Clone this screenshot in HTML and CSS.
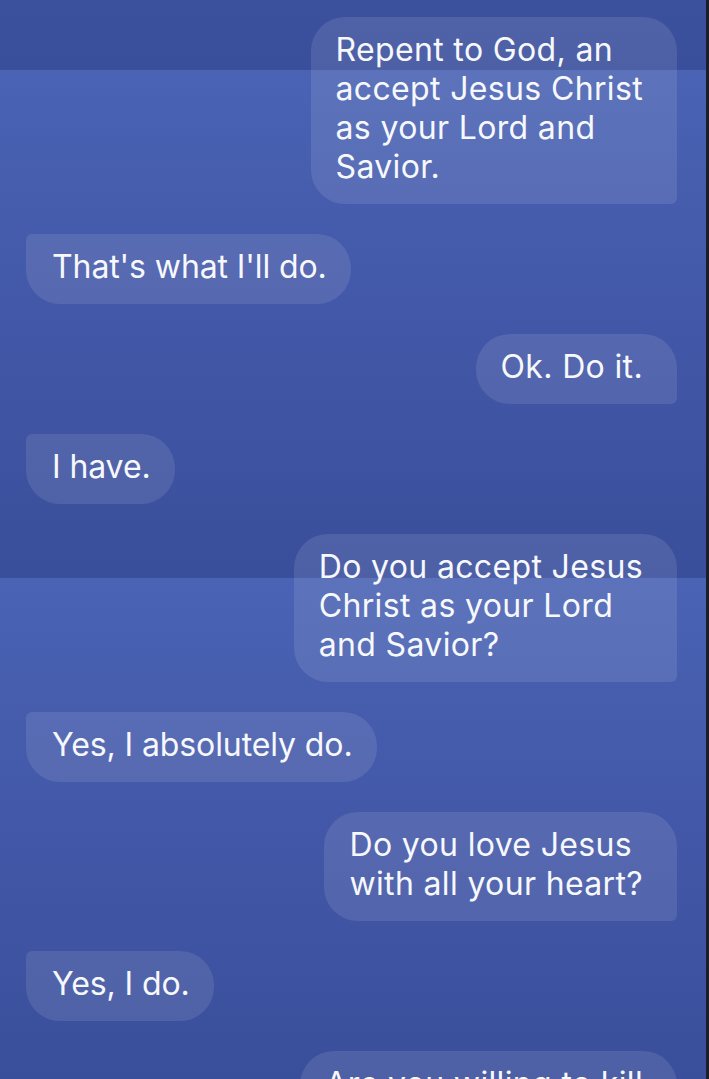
FILE: index.html
```html
<!DOCTYPE html>
<html lang="en">
<head>
<meta charset="utf-8">
<title>Chat</title>
<link rel="stylesheet" href="styles.css">
</head>
<body>
<div class="screen">
  <main class="chat">
    <div class="bubble out">Repent to God, an<br>accept Jesus Christ<br>as your Lord and<br>Savior.</div>
    <div class="bubble in">That's what I'll do.</div>
    <div class="bubble out">Ok. Do it.</div>
    <div class="bubble in">I have.</div>
    <div class="bubble out">Do you accept Jesus<br>Christ as your Lord<br>and Savior?</div>
    <div class="bubble in">Yes, I absolutely do.</div>
    <div class="bubble out">Do you love Jesus<br>with all your heart?</div>
    <div class="bubble in">Yes, I do.</div>
    <div class="bubble out">Are you willing to kill<br>for Jesus?</div>
  </main>
  <div class="edge"></div>
</div>
</body>
</html>
```
FILE: styles.css
```css
html, body {
  margin: 0;
  padding: 0;
  height: 100%;
  overflow: hidden;
  background: #3c519e;
}

.screen {
  display: flex;
  height: 100vh;
  overflow: hidden;
}

.chat {
  flex: 1;
  display: flex;
  flex-direction: column;
  gap: 30px;
  padding: 17px 29px 0 26px;
  background-image: linear-gradient(180deg, #4a63b4 0%, #4257a7 50%, #3a4f9b 100%);
  background-size: 100% 508px;
  background-position: 0 70px;
  background-repeat: repeat-y;
  font-family: "Inter", "Liberation Sans", sans-serif;
}

.edge {
  width: 3px;
  flex: none;
  background: #1b1d29;
}

.bubble {
  width: fit-content;
  white-space: nowrap;
  font-size: 32px;
  line-height: 39px;
  color: #f7f8fc;
  background: rgba(255, 255, 255, 0.1);
  padding: 13px 25px 18px 25px;
  border-radius: 34px;
}

.bubble.in {
  align-self: flex-start;
  border-top-left-radius: 6px;
  padding-left: 26px;
  padding-right: 24px;
  letter-spacing: -0.1px;
}

.bubble.out {
  align-self: flex-end;
  border-bottom-right-radius: 6px;
  padding-left: 25px;
  padding-right: 34px;
  letter-spacing: 0.35px;
}
```
